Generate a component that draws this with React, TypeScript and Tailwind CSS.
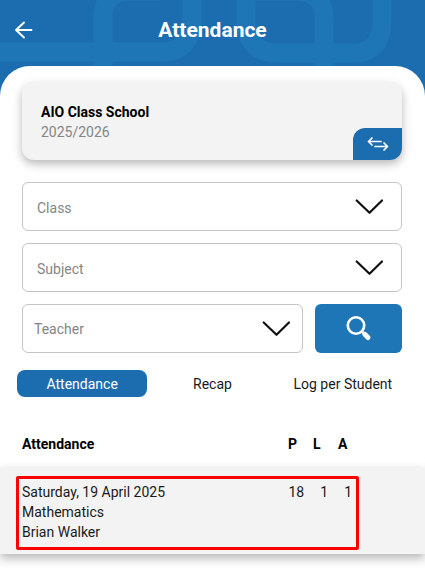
import type { ReactNode } from "react";

const fieldClass =
  "block h-[49px] w-full appearance-none rounded-md border border-[#c4c4c4] bg-white text-sm text-[#858585] outline-none";

const columns = ["P", "L", "A"];

const records = [
  {
    date: "Saturday, 19 April 2025",
    subject: "Mathematics",
    teacher: "Brian Walker",
    counts: [18, 1, 1],
  },
];

function SelectField({ label, compact }: { label: string; compact?: boolean }) {
  return (
    <div className="relative min-w-0 flex-1">
      <select
        aria-label={label}
        className={`${fieldClass} ${compact ? "pt-px pl-[11px]" : "pt-0.5 pl-[14px]"}`}
      >
        <option>{label}</option>
      </select>
      <svg
        viewBox="0 0 28 16"
        className={`pointer-events-none absolute top-4 h-4 w-7 ${compact ? "right-[13px]" : "right-[19px]"}`}
        fill="none"
        stroke="#111"
        strokeWidth="2.2"
        strokeLinecap="round"
        strokeLinejoin="round"
      >
        <path d="M1.7 2.5 L14.5 14.8 L27 2.5" />
      </svg>
    </div>
  );
}

function Tab({ active, children }: { active?: boolean; children: ReactNode }) {
  return (
    <button
      type="button"
      role="tab"
      aria-selected={!!active}
      className={
        active
          ? "h-[27px] rounded-lg bg-[#1c6db0] text-sm text-white"
          : "h-[27px] text-sm text-[#1a1a1a]"
      }
    >
      {children}
    </button>
  );
}

export default function App() {
  return (
    <div className="min-h-screen bg-white font-['Roboto',sans-serif] text-[#1a1a1a]">
      {/* Header */}
      <header className="relative overflow-hidden bg-[#1c6db0] pb-10">
        <svg
          viewBox="0 0 425 106"
          preserveAspectRatio="xMidYMin slice"
          className="absolute inset-0 h-full w-full"
          fill="none"
          stroke="#1e76b7"
          strokeWidth="19"
        >
          <path d="M-5 52 H162 C181 52 192 41 192 20 V-10" />
          <path d="M103 106 V18 C103 0 113 -9 131 -9 H160" />
          <path d="M246 -10 V22 C246 42 258 53 277 53 H353 C372 53 382 42 382 22 V-10" />
          <path d="M324 106 V18 C324 0 314 -9 296 -9 H246" />
        </svg>
        <div className="relative flex h-[66px] items-center px-[14px] pb-[5px]">
          <button type="button" aria-label="Back" className="w-5">
            <svg
              viewBox="0 0 20 20"
              className="h-5 w-5"
              fill="none"
              stroke="white"
              strokeWidth="1.9"
              strokeLinecap="round"
              strokeLinejoin="round"
            >
              <path d="M17.5 9 H2 M10 1.5 L2 9 L10 16.5" />
            </svg>
          </button>
          <h1 className="flex-1 pr-5 text-center text-[21px] font-bold text-white">Attendance</h1>
        </div>
      </header>

      <main className="relative -mt-10 rounded-t-[30px] bg-white pt-4">
        <div className="pr-[23px] pl-[22px]">
          {/* Current school */}
          <section className="flex h-[78px] items-end justify-between rounded-xl bg-[#f3f3f3] pl-[19px] shadow-[0_4px_10px_rgba(0,0,0,0.28)]">
            <div className="self-center pt-0.5 text-sm leading-5">
              <h2 className="font-bold text-black">AIO Class School</h2>
              <p className="text-[#858585]">2025/2026</p>
            </div>
            <button
              type="button"
              aria-label="Switch school"
              className="flex h-8 w-[49px] items-center justify-center rounded-tl-xl rounded-br-xl bg-[#1c6db0]"
            >
              <svg
                viewBox="0 0 22 16"
                className="h-4 w-[22px]"
                fill="none"
                stroke="white"
                strokeWidth="1.7"
                strokeLinecap="round"
                strokeLinejoin="round"
              >
                <path d="M14 5.5 H1.5 M5 2 L1.5 5.5 L5 9" />
                <path d="M8 10.5 H20.5 M17 7 L20.5 10.5 L17 14" />
              </svg>
            </button>
          </section>

          {/* Filters */}
          <form className="mt-[22px] flex flex-col gap-3">
            <SelectField label="Class" />
            <SelectField label="Subject" />
            <div className="flex gap-3">
              <SelectField label="Teacher" compact />
              <button
                type="button"
                aria-label="Search"
                className="flex h-[49px] w-[87px] items-center justify-center rounded-md bg-[#1e76b7]"
              >
                <svg viewBox="0 0 26 26" className="h-[26px] w-[26px]" fill="none" stroke="white">
                  <circle cx="10" cy="9.5" r="8.2" strokeWidth="2.6" />
                  <path d="M15.8 15.3 L18.5 18" strokeWidth="2.6" />
                  <path d="M18.8 18.3 L22 21.5" strokeWidth="5" strokeLinecap="round" />
                </svg>
              </button>
            </div>
          </form>
        </div>

        {/* Tabs */}
        <div role="tablist" className="mt-[17px] grid grid-cols-3 px-[17px]">
          <Tab active>Attendance</Tab>
          <Tab>Recap</Tab>
          <Tab>Log per Student</Tab>
        </div>

        <table className="mt-[26px] w-full table-fixed text-left text-sm leading-5">
          <colgroup>
            <col />
            <col className="w-[25px]" />
            <col className="w-[25px]" />
            <col className="w-[87px]" />
          </colgroup>
          <thead className="text-black">
            <tr className="h-[45px]">
              <th className="pb-1 pl-[22px] font-bold">Attendance</th>
              {columns.map((column) => (
                <th key={column} className="pb-1 font-bold">
                  {column}
                </th>
              ))}
            </tr>
          </thead>
          <tbody>
            {records.map((record) => (
              <tr key={record.date} className="bg-[#f3f3f3] shadow-[0_4px_10px_rgba(0,0,0,0.3)]">
                <td colSpan={4} className="pt-2 pr-[66px] pb-1 pl-4">
                  <div className="flex h-[74px] justify-between rounded-xs border-3 border-[#ff0000] py-[3px] pr-1 pl-[3px]">
                    <div>
                      <p>{record.date}</p>
                      <p>{record.subject}</p>
                      <p>{record.teacher}</p>
                    </div>
                    <div className="flex gap-4">
                      {record.counts.map((count, i) => (
                        <span key={columns[i]}>{count}</span>
                      ))}
                    </div>
                  </div>
                </td>
              </tr>
            ))}
          </tbody>
        </table>
      </main>
    </div>
  );
}
